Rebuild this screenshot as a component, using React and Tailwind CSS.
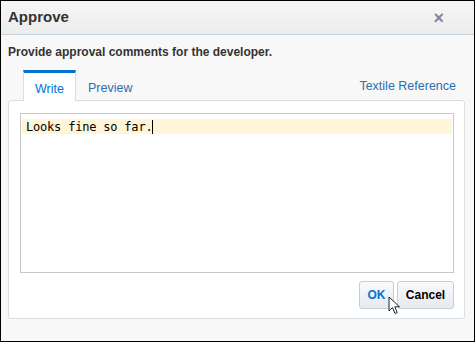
export default function App() {
  return (
    <div className="w-[475px] h-[342px] bg-black p-[1px] box-border" style={{ fontFamily: '"Liberation Sans", Arial, sans-serif' }}>
      <div className="w-full h-full bg-[#f8f8f8] flex flex-col pb-[1px]">
        <div className="h-[34px] shrink-0 flex items-center justify-between pl-[7px] pr-[30px] bg-gradient-to-b from-[#f6f6f6] to-[#ececec] border-b border-[#c6d2dc]">
          <span className="text-[15px] font-bold text-[#333]">Approve</span>
          <span className="text-[18px] font-bold text-[#7c8a9c] leading-none">×</span>
        </div>
        <div className="flex-1 flex flex-col pl-[7px] pr-[9px] pt-[10px] pb-[21px]">
          <div className="text-[12px] font-bold text-[#333] leading-[14px]">Provide approval comments for the developer.</div>
          <div className="mt-[11px] flex items-end justify-between pl-[15px] pr-[9px]">
            <div className="flex items-end">
              <div className="w-[53px] h-[31px] bg-white border-t-[3px] border-[#0572ce] border-x border-x-[#d6dfe6] flex items-center justify-center pt-[4px] text-[12.5px] text-[#0572ce] -mb-px relative z-10">Write</div>
              <div className="h-[30px] px-[12px] flex items-center pt-[6px] text-[12.5px] text-[#2d6eb3]">Preview</div>
            </div>
            <div className="h-[30px] flex items-center text-[12.5px] text-[#2d6eb3] pt-[2px]">Textile Reference</div>
          </div>
          <div className="flex-1 bg-white border border-[#d6dfe6] rounded-[3px] flex flex-col pl-[11px] pr-[10px] pt-[12px] pb-[7px]">
            <div className="h-[160px] border border-[#c8c8c8] pt-[5px] px-[1px]">
              <div className="h-[15px] bg-[#fff5d8] flex items-center pl-[4px] text-[12px] text-black" style={{ fontFamily: '"DejaVu Sans Mono", monospace' }}>
                <span className="tracking-[-0.2px]">Looks fine so far.</span>
                <span className="w-px h-[14px] bg-black"></span>
              </div>
            </div>
            <div className="flex justify-end gap-[3px] mt-[8px]">
              <div className="relative h-[28px] w-[35px] rounded-[3px] border border-[#c4ced7] bg-gradient-to-b from-[#f8fafc] to-[#e6eaee] flex items-center justify-center text-[12px] font-bold text-[#0572ce]">
                OK
                <svg className="absolute left-[28px] top-[14px] z-10" width="13" height="20" viewBox="0 0 13 20">
                  <path d="M1 1 L1 15 L4.5 11.5 L7 17.5 L9.2 16.6 L6.8 10.8 L11.5 10.8 Z" fill="white" stroke="#222" strokeWidth="1" strokeLinejoin="miter" />
                </svg>
              </div>
              <div className="h-[28px] w-[57px] rounded-[3px] border border-[#c4ced7] bg-gradient-to-b from-[#f8fafc] to-[#e6eaee] flex items-center justify-center text-[12px] font-bold text-black">Cancel</div>
            </div>
          </div>
        </div>
      </div>
    </div>
  );
}
